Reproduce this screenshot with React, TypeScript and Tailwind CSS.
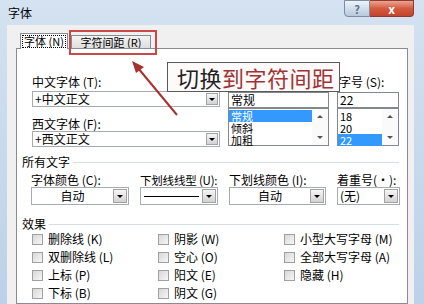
import React from "react";

const cjk = "font-['Noto_Sans_CJK_SC','Noto_Sans',sans-serif]";

function DropBtn({ tall }: { tall?: boolean }) {
  return (
    <div
      className={`${tall ? "w-[14px]" : "w-[12px]"} my-[1px] mr-[1px] flex items-center justify-center border border-[#a3a3a3] bg-gradient-to-b from-[#f6f6f6] to-[#d2d2d2]`}
    >
      <span className="block w-0 h-0 border-l-[3px] border-r-[3px] border-t-[3px] border-l-transparent border-r-transparent border-t-black" />
    </div>
  );
}

function Combo({
  text,
  center,
  line,
  h = "h-[16px]",
}: {
  text?: string;
  center?: boolean;
  line?: boolean;
  h?: string;
}) {
  return (
    <div className={`${h} flex border border-[#a5acb5] bg-white`}>
      <div
        className={`flex-1 flex items-center px-[2px] ${center ? "justify-center" : ""}`}
      >
        {line ? <div className="w-full h-px bg-black mx-[1px]" /> : text}
      </div>
      <DropBtn tall={h !== "h-[16px]"} />
    </div>
  );
}

function ListBox({ items, selected }: { items: string[]; selected: number }) {
  return (
    <div className="h-[38px] flex border border-[#828790] bg-white">
      <div className="flex-1 flex flex-col pt-[1px]">
        {items.map((it, i) => (
          <div
            key={it}
            className={`h-[12px] leading-[12px] text-[11px] pl-[2px] ${
              i === selected ? "bg-[#3399ff] text-white" : ""
            }`}
          >
            {it}
          </div>
        ))}
      </div>
      <div className="w-[16px] flex flex-col items-center justify-between py-[6px] bg-[#fafafa]">
        <span className="block w-0 h-0 border-l-[3px] border-r-[3px] border-b-[3px] border-l-transparent border-r-transparent border-b-[#555]" />
        <span className="block w-0 h-0 border-l-[3px] border-r-[3px] border-t-[3px] border-l-transparent border-r-transparent border-t-[#555]" />
      </div>
    </div>
  );
}

function Section({ title }: { title: string }) {
  return (
    <div className="flex items-center gap-[3px] h-[12px] pr-[8px]">
      <span>{title}</span>
      <div className="flex-1 h-px bg-[#d5dfe5]" />
    </div>
  );
}

function Check({ label }: { label: string }) {
  return (
    <div className="h-[18px] flex items-center gap-[5px]">
      <span className="block w-[11px] h-[11px] border border-[#a0a0a0] bg-gradient-to-br from-[#d8d8d8] to-[#f6f6f6]" />
      <span>{label}</span>
    </div>
  );
}

export default function App() {
  const effects = [
    ["删除线 (K)", "阴影 (W)", "小型大写字母 (M)"],
    ["双删除线 (L)", "空心 (O)", "全部大写字母 (A)"],
    ["上标 (P)", "阳文 (E)", "隐藏 (H)"],
    ["下标 (B)", "阴文 (G)", ""],
  ];

  return (
    <div
      className={`relative w-[424px] h-[304px] overflow-hidden flex flex-col bg-gradient-to-b from-[#d4e2f1] to-[#bcd1e8] text-[12px] leading-[12px] text-black whitespace-nowrap ${cjk}`}
    >
      {/* title bar */}
      <div className="h-[25px] shrink-0 flex items-start justify-between">
        <span className="pl-[8px] pt-[7px]">字体</span>
        <div className="flex mr-[10px]">
          <div className="w-[26px] h-[17px] rounded-bl-[4px] border border-[#7b8ca3] bg-gradient-to-b from-[#eef3f9] to-[#b7c9de] flex items-center justify-center text-[11px] font-bold text-[#5d6f86]">
            ?
          </div>
          <div className="w-[44px] h-[17px] rounded-br-[4px] border border-l-0 border-[#8d3b2e] bg-gradient-to-b from-[#e9a491] via-[#d45a3f] to-[#c2452d] flex items-center justify-center text-[12px] font-bold text-white">
            x
          </div>
        </div>
      </div>

      {/* client area */}
      <div className="flex-1 min-h-0 ml-[7px] mr-[10px] bg-[#f0f0f0] flex flex-col pt-[8px] pl-[9px] pr-[6px]">
        {/* tabs */}
        <div className="h-[15px] shrink-0 flex items-start pl-[4px]">
          <div className="relative z-10 w-[48px] h-[16px] bg-white border border-b-0 border-[#898c95] flex items-center justify-center">
            <span className="border border-dotted border-black px-[1px] leading-[11px] text-[11px]">
              字体 (N)
            </span>
          </div>
          <div className="ml-[3px] mt-[2px] w-[80px] h-[13px] border border-b-0 border-[#898c95] bg-gradient-to-b from-[#f3f3f3] to-[#dedede] flex items-center justify-center text-[11px]">
            字符间距 (R)
          </div>
        </div>

        {/* tab page */}
        <div className="flex-1 min-h-0 bg-white border border-[#898c95] pl-[5px] pt-[27px]">
          <div className="ml-[10px] grid grid-cols-[188px_101px_62px] gap-x-[8px]">
            <div className="flex flex-col">
              <span className="h-[12px]">中文字体 (T):</span>
              <div className="mt-[3px]">
                <Combo text="+中文正文" />
              </div>
              <span className="mt-[11px] h-[12px]">西文字体 (F):</span>
              <div className="mt-[1px]">
                <Combo text="+西文正文" />
              </div>
            </div>
            <div className="flex flex-col">
              <span className="h-[12px]" />
              <div className="mt-[4px] h-[16px] border border-[#828790] flex items-center pl-[2px]">
                常规
              </div>
              <ListBox items={["常规", "倾斜", "加粗"]} selected={0} />
            </div>
            <div className="flex flex-col">
              <span className="h-[12px] pl-[2px]">字号 (S):</span>
              <div className="mt-[4px] h-[16px] border border-[#828790] flex items-center pl-[2px]">
                22
              </div>
              <ListBox items={["18", "20", "22"]} selected={2} />
            </div>
          </div>

          <div className="mt-[9px]">
            <Section title="所有文字" />
          </div>
          <div className="mt-[6px] ml-[9px] grid grid-cols-[98px_78px_97px_63px] gap-x-[11px] gap-y-[1px]">
            <span className="h-[12px]">字体颜色 (C):</span>
            <span className="h-[12px] text-[11.5px] tracking-[-0.2px]">下划线线型 (U):</span>
            <span className="h-[12px]">下划线颜色 (I):</span>
            <span className="h-[12px]">着重号(・):</span>
            <Combo text="自动" center h="h-[18px]" />
            <Combo line h="h-[18px]" />
            <Combo text="自动" center h="h-[18px]" />
            <Combo text="(无)" h="h-[18px]" />
          </div>

          <div className="mt-[13px]">
            <Section title="效果" />
          </div>
          <div className="ml-[10px] grid grid-cols-[126px_126px_120px]">
            {effects.flat().map((e, i) =>
              e ? <Check key={i} label={e} /> : <div key={i} />
            )}
          </div>
        </div>
      </div>

      {/* red highlight around second tab */}
      <div className="absolute left-[69px] top-[30px] w-[88px] h-[25px] border-2 border-[#c94848]" />

      {/* callout */}
      <div className="absolute left-[167px] top-[62px] w-[173px] h-[30px] border border-[#5a5a5a] bg-[#fffafa] flex items-center pl-[9px] text-[22px] leading-[28px] tracking-[0.5px]">
        <span className="text-[#222]">切换</span>
        <span className="text-[#a03434]">到字符间距</span>
      </div>

      {/* arrow */}
      <svg
        className="absolute left-0 top-0 pointer-events-none"
        width="424"
        height="304"
        viewBox="0 0 424 304"
      >
        <line x1="177" y1="115" x2="138" y2="68" stroke="#a8302f" strokeWidth="2" />
        <polygon points="132,61 144,67 136,73" fill="#a8302f" />
      </svg>
    </div>
  );
}
